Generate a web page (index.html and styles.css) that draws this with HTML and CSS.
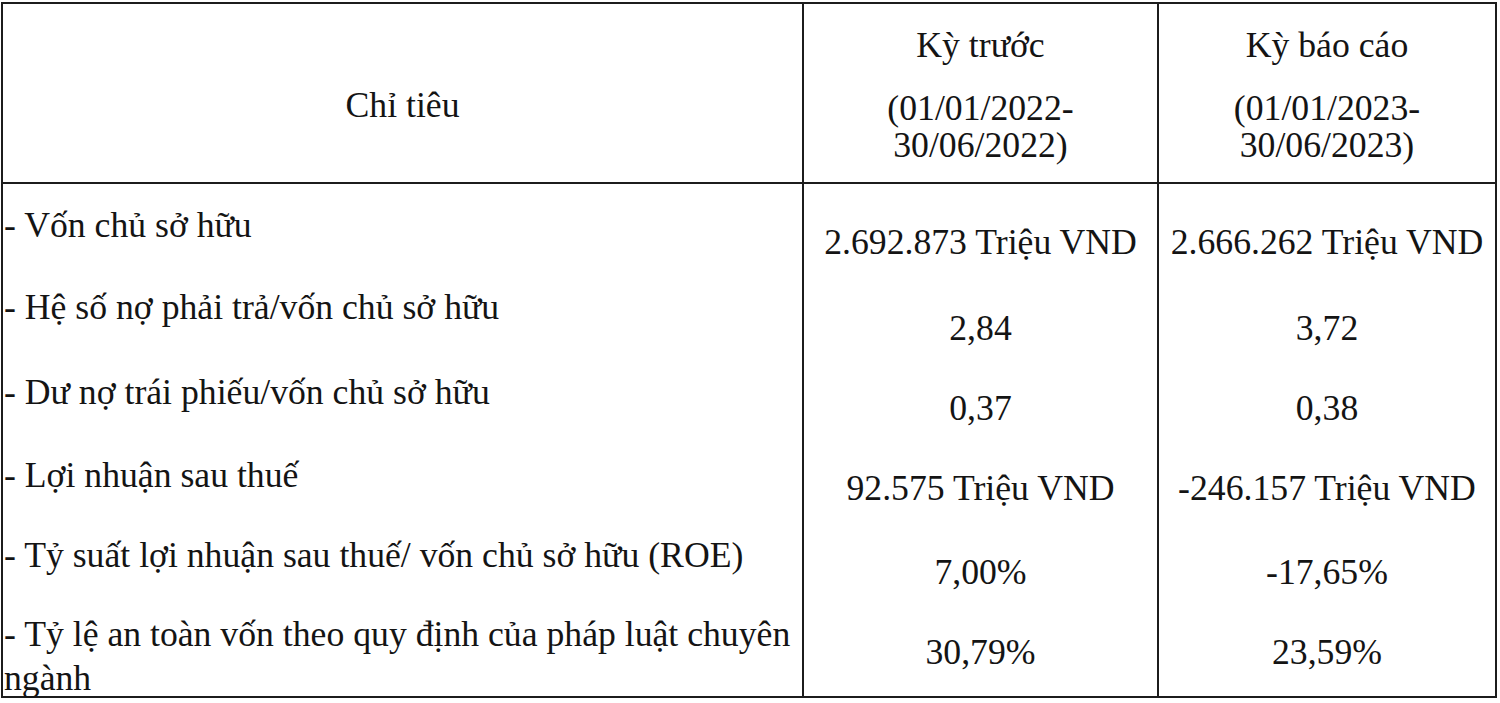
FILE: index.html
```html
<!DOCTYPE html>
<html lang="vi">
<head>
<meta charset="utf-8">
<title>Chỉ tiêu tài chính</title>
<link rel="stylesheet" href="styles.css">
</head>
<body>
<div class="sheet">
  <div class="row head">
    <div class="cell name"><p class="line">Chỉ tiêu</p></div>
    <div class="cell period">
      <p class="line">Kỳ trước</p>
      <p class="dates">(01/01/2022-<br>30/06/2022)</p>
    </div>
    <div class="cell period">
      <p class="line">Kỳ báo cáo</p>
      <p class="dates">(01/01/2023-<br>30/06/2023)</p>
    </div>
  </div>
  <div class="body">
    <div class="row r1">
      <div class="cell label">- Vốn chủ sở hữu</div>
      <div class="cell val">2.692.873 Triệu VND</div>
      <div class="cell val">2.666.262 Triệu VND</div>
    </div>
    <div class="row r2">
      <div class="cell label">- Hệ số nợ phải trả/vốn chủ sở hữu</div>
      <div class="cell val">2,84</div>
      <div class="cell val">3,72</div>
    </div>
    <div class="row r3">
      <div class="cell label">- Dư nợ trái phiếu/vốn chủ sở hữu</div>
      <div class="cell val">0,37</div>
      <div class="cell val">0,38</div>
    </div>
    <div class="row r4">
      <div class="cell label">- Lợi nhuận sau thuế</div>
      <div class="cell val">92.575 Triệu VND</div>
      <div class="cell val">-246.157 Triệu VND</div>
    </div>
    <div class="row r5">
      <div class="cell label">- Tỷ suất lợi nhuận sau thuế/ vốn chủ sở hữu (ROE)</div>
      <div class="cell val">7,00%</div>
      <div class="cell val">-17,65%</div>
    </div>
    <div class="row r6">
      <div class="cell label wrap">- Tỷ lệ an toàn vốn theo quy định của pháp luật chuyên<br>ngành</div>
      <div class="cell val">30,79%</div>
      <div class="cell val">23,59%</div>
    </div>
  </div>
</div>
</body>
</html>
```

FILE: styles.css
```css
html, body {
  margin: 0;
  padding: 0;
  background: #ffffff;
}

body {
  font-family: "Liberation Serif", "Times New Roman", serif;
  font-size: 35.7px;
  color: #141414;
}

.sheet {
  margin: 2px 0 0 1px;
  width: 1492px;
  border: 2px solid #1c1c1c;
}

.row {
  display: grid;
  grid-template-columns: 799px 355px 1fr;
}

.cell {
  box-sizing: border-box;
  line-height: 40px;
  white-space: nowrap;
}

.cell + .cell {
  border-left: 2px solid #1c1c1c;
}

p {
  margin: 0;
}

/* header */
.head {
  height: 178px;
  border-bottom: 2px solid #1c1c1c;
}

.head .cell {
  text-align: center;
}

.name {
  padding-top: 81px;
}

.period {
  padding-top: 21px;
}

.dates {
  margin-top: 25px;
  line-height: 37px;
}

/* body rows */
.r1 { --h: 101px; --lab: 21px; --val: 38px; }
.r2 { --h: 85px;  --lab: 2px;  --val: 23px; }
.r3 { --h: 83px;  --lab: 2px;  --val: 18px; }
.r4 { --h: 80px;  --lab: 2px;  --val: 15px; }
.r5 { --h: 77px;  --lab: 2px;  --val: 19px; }
.r6 { --h: 86px;  --lab: 2px;  --val: 22px; }

.body .row {
  height: var(--h);
}

.label {
  padding-top: var(--lab);
  padding-left: 1px;
  text-align: left;
}

.label.wrap {
  line-height: 44px;
}

.val {
  padding-top: var(--val);
  text-align: center;
}
```
